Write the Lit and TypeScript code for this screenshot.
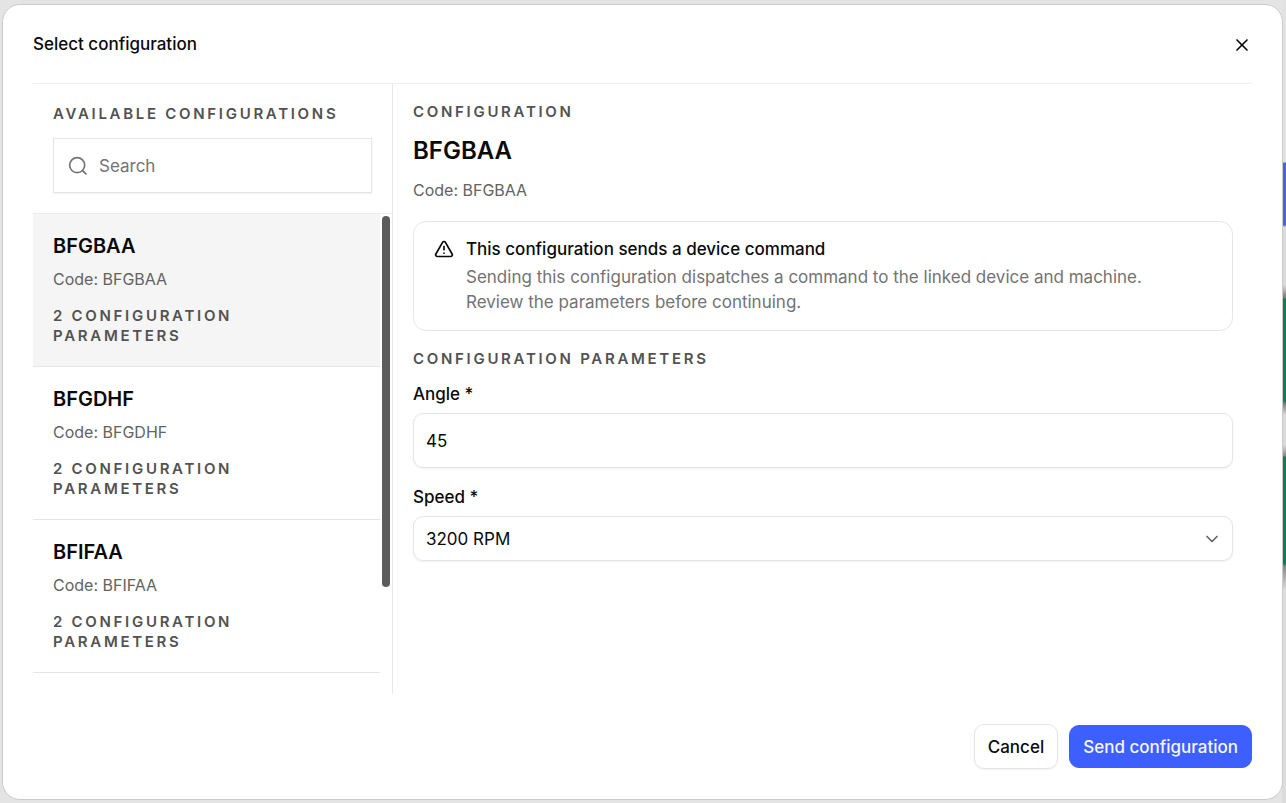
import { LitElement, html, css } from "lit";
import { customElement, property, state } from "lit/decorators.js";
import { classMap } from "lit/directives/class-map.js";

interface Configuration {
  code: string;
  parameters: number;
}

const CONFIGURATIONS: Configuration[] = [
  { code: "BFGBAA", parameters: 2 },
  { code: "BFGDHF", parameters: 2 },
  { code: "BFIFAA", parameters: 2 },
];

const shared = css`
  * {
    box-sizing: border-box;
  }
  h1,
  h2,
  h3,
  p {
    margin: 0;
  }
  button,
  input,
  select {
    font: inherit;
    color: inherit;
    margin: 0;
  }
  svg {
    display: block;
    flex: none;
    fill: none;
    stroke: currentColor;
    stroke-linecap: round;
    stroke-linejoin: round;
  }
  .eyebrow {
    font-size: 15px;
    line-height: 20px;
    font-weight: 600;
    letter-spacing: 0.18em;
    text-transform: uppercase;
    color: #525252;
  }
  .code {
    font-size: 16px;
    line-height: 22px;
    color: #636363;
  }
`;

@customElement("configuration-list")
export class ConfigurationList extends LitElement {
  @property() selected = "";
  @state() private query = "";

  static styles = [
    shared,
    css`
      :host {
        display: flex;
        flex-direction: column;
        min-height: 0;
        border-right: 1px solid #e8e8e8;
      }
      .top {
        display: flex;
        flex-direction: column;
        gap: 14px;
        padding: 20px;
        border-bottom: 1px solid #ececec;
      }
      .search {
        display: flex;
        align-items: center;
        gap: 11px;
        height: 55px;
        padding: 0 14px;
        border: 1px solid #e5e5e5;
        box-shadow: 0 1px 2px rgba(0, 0, 0, 0.06);
        color: #737373;
      }
      .search input {
        flex: 1;
        min-width: 0;
        padding: 0;
        border: 0;
        outline: 0;
        background: none;
      }
      .search input::placeholder {
        color: #737373;
        opacity: 1;
      }
      .scroller {
        display: flex;
        flex: 1;
        min-height: 0;
      }
      .items {
        flex: 1;
        min-width: 0;
        overflow: hidden;
      }
      .item {
        display: block;
        width: 100%;
        padding: 20px;
        border: 0;
        border-bottom: 1px solid #e5e5e5;
        background: none;
        text-align: left;
      }
      .item.active {
        background: #f5f5f5;
      }
      .item span {
        display: block;
      }
      .name {
        font-size: 20px;
        line-height: 24px;
        font-weight: 600;
      }
      .item .code {
        margin: 10px 0 16px;
      }
      .item .eyebrow {
        max-width: 220px;
      }
      .track {
        display: flex;
        flex-direction: column;
        flex: none;
        width: 12px;
        padding: 2px;
      }
      .thumb {
        height: 78%;
        border-radius: 4px;
        background: #5c5c5c;
      }
    `,
  ];

  private select(code: string) {
    this.dispatchEvent(new CustomEvent("pick", { detail: code }));
  }

  render() {
    const items = CONFIGURATIONS.filter((c) => c.code.includes(this.query.toUpperCase()));
    return html`
      <div class="top">
        <h2 class="eyebrow">Available configurations</h2>
        <label class="search">
          <svg width="20" height="20" viewBox="0 0 24 24" stroke-width="2" aria-hidden="true">
            <circle cx="11" cy="11" r="9"></circle>
            <path d="m21.500 21.500-4-4"></path>
          </svg>
          <input
            type="text"
            placeholder="Search"
            aria-label="Search"
            @input=${(e: Event) => (this.query = (e.target as HTMLInputElement).value)}
          />
        </label>
      </div>
      <div class="scroller">
        <div class="items">
          ${items.map(
            (c) => html`
              <button
                type="button"
                class=${classMap({ item: true, active: c.code === this.selected })}
                @click=${() => this.select(c.code)}
              >
                <span class="name">${c.code}</span>
                <span class="code">${`Code: ${c.code}`}</span>
                <span class="eyebrow">${`${c.parameters} configuration parameters`}</span>
              </button>
            `
          )}
        </div>
        <div class="track"><div class="thumb"></div></div>
      </div>
    `;
  }
}

@customElement("configuration-detail")
export class ConfigurationDetail extends LitElement {
  @property() code = "";

  static styles = [
    shared,
    css`
      :host {
        display: block;
        min-width: 0;
        padding: 18px 19px 18px 20px;
      }
      .title {
        margin: 14px 0 13px;
        font-size: 24px;
        line-height: 30px;
        font-weight: 600;
      }
      .alert {
        display: flex;
        gap: 12px;
        margin: 20px 0 18px;
        padding: 15px 20px;
        border: 1px solid #e5e5e5;
        border-radius: 13px;
      }
      .alert svg {
        margin-top: 2px;
      }
      .alert h3 {
        font-size: 17px;
        line-height: 25px;
        font-weight: 500;
      }
      .alert p {
        margin-top: 3px;
        line-height: 25px;
        color: #737373;
      }
      .fields {
        display: flex;
        flex-direction: column;
        gap: 18px;
        margin-top: 14px;
      }
      .field {
        display: flex;
        flex-direction: column;
        gap: 8px;
      }
      .field label {
        line-height: 22px;
        font-weight: 500;
      }
      .control {
        width: 100%;
        padding: 0 12px;
        border: 1px solid #e5e5e5;
        border-radius: 10px;
        background: #fff;
        box-shadow: 0 1px 2px rgba(0, 0, 0, 0.06);
        outline: 0;
      }
      .text {
        height: 55px;
      }
      .select {
        display: grid;
        align-items: center;
      }
      .select > * {
        grid-area: 1 / 1;
      }
      .select select {
        height: 45px;
        appearance: none;
      }
      .select svg {
        justify-self: end;
        margin-right: 11px;
        color: #636363;
        pointer-events: none;
      }
    `,
  ];

  render() {
    return html`
      <p class="eyebrow">Configuration</p>
      <h2 class="title">${this.code}</h2>
      <p class="code">${`Code: ${this.code}`}</p>
      <div class="alert" role="note">
        <svg width="20" height="20" viewBox="0 0 24 24" stroke-width="2" aria-hidden="true">
          <path
            d="m21.730 18-8-14a2 2 0 0 0-3.480 0l-8 14A2 2 0 0 0 4 21h16a2 2 0 0 0 1.730-3"
          ></path>
          <path d="M12 9v4"></path>
          <path d="M12 17h.01"></path>
        </svg>
        <div>
          <h3>This configuration sends a device command</h3>
          <p>
            Sending this configuration dispatches a command to the linked device and machine.
            <br />Review the parameters before continuing.
          </p>
        </div>
      </div>
      <h3 class="eyebrow">Configuration parameters</h3>
      <div class="fields">
        <div class="field">
          <label for="angle">Angle *</label>
          <input id="angle" class="control text" type="text" inputmode="numeric" value="45" />
        </div>
        <div class="field">
          <label for="speed">Speed *</label>
          <div class="select">
            <select id="speed" class="control">
              <option>3200 RPM</option>
            </select>
            <svg width="20" height="20" viewBox="0 0 24 24" stroke-width="2" aria-hidden="true">
              <path d="m6 9 6 6 6-6"></path>
            </svg>
          </div>
        </div>
      </div>
    `;
  }
}

@customElement("app-root")
export class AppRoot extends LitElement {
  @state() private selected = "BFGBAA";

  static styles = [
    shared,
    css`
      :host {
        display: flex;
        box-sizing: border-box;
        min-height: 100vh;
        padding: 4px 3px 3px 2px;
        background:
          linear-gradient(
              #e2e2e2 162px,
              #4c63d9 163px 225px,
              #dadada 227px 285px,
              #777 298px,
              #147a55 299px 401px,
              #777 403px,
              #dadada 415px 445px,
              #888 456px,
              #147a55 457px 564px,
              #888 566px,
              #dcdcdc 590px
            )
            right / 4px 100% no-repeat,
          #e4e4e4;
        font-family: Inter, "Liberation Sans", sans-serif;
        font-size: 17px;
        line-height: 24px;
        color: #0a0a0a;
      }
      .dialog {
        display: flex;
        flex-direction: column;
        flex: 1;
        min-width: 0;
        padding: 0 30px 30px;
        border: 1px solid #cbcbcb;
        border-radius: 18px;
        background: #fff;
      }
      header {
        display: flex;
        align-items: center;
        justify-content: space-between;
        height: 79px;
        border-bottom: 1px solid #f0f0f0;
      }
      h1 {
        font-size: 17px;
        line-height: 24px;
        font-weight: 500;
      }
      .close {
        padding: 2px 0 0;
        border: 0;
        background: none;
      }
      .body {
        display: grid;
        grid-template-columns: 360px minmax(0, 1fr);
        flex: 1;
        min-height: 0;
      }
      footer {
        display: flex;
        align-items: center;
        justify-content: flex-end;
        gap: 11px;
        padding-top: 30px;
      }
      .btn {
        height: 45px;
        padding: 0 13px;
        border: 1px solid #e5e5e5;
        border-radius: 10px;
        background: #fff;
        box-shadow: 0 1px 2px rgba(0, 0, 0, 0.06);
        font-weight: 500;
      }
      .btn.primary {
        height: 43px;
        border-color: #3d5fff;
        background: #3d5fff;
        box-shadow: none;
        color: #f5f7ff;
      }
    `,
  ];

  render() {
    return html`
      <section class="dialog" role="dialog" aria-labelledby="heading">
        <header>
          <h1 id="heading">Select configuration</h1>
          <button class="close" type="button" aria-label="Close">
            <svg width="20" height="20" viewBox="0 0 24 24" stroke-width="2" aria-hidden="true">
              <path d="M18 6 6 18"></path>
              <path d="m6 6 12 12"></path>
            </svg>
          </button>
        </header>
        <div class="body">
          <configuration-list
            .selected=${this.selected}
            @pick=${(e: CustomEvent<string>) => (this.selected = e.detail)}
          ></configuration-list>
          <configuration-detail .code=${this.selected}></configuration-detail>
        </div>
        <footer>
          <button class="btn" type="button">Cancel</button>
          <button class="btn primary" type="button">Send configuration</button>
        </footer>
      </section>
    `;
  }
}
